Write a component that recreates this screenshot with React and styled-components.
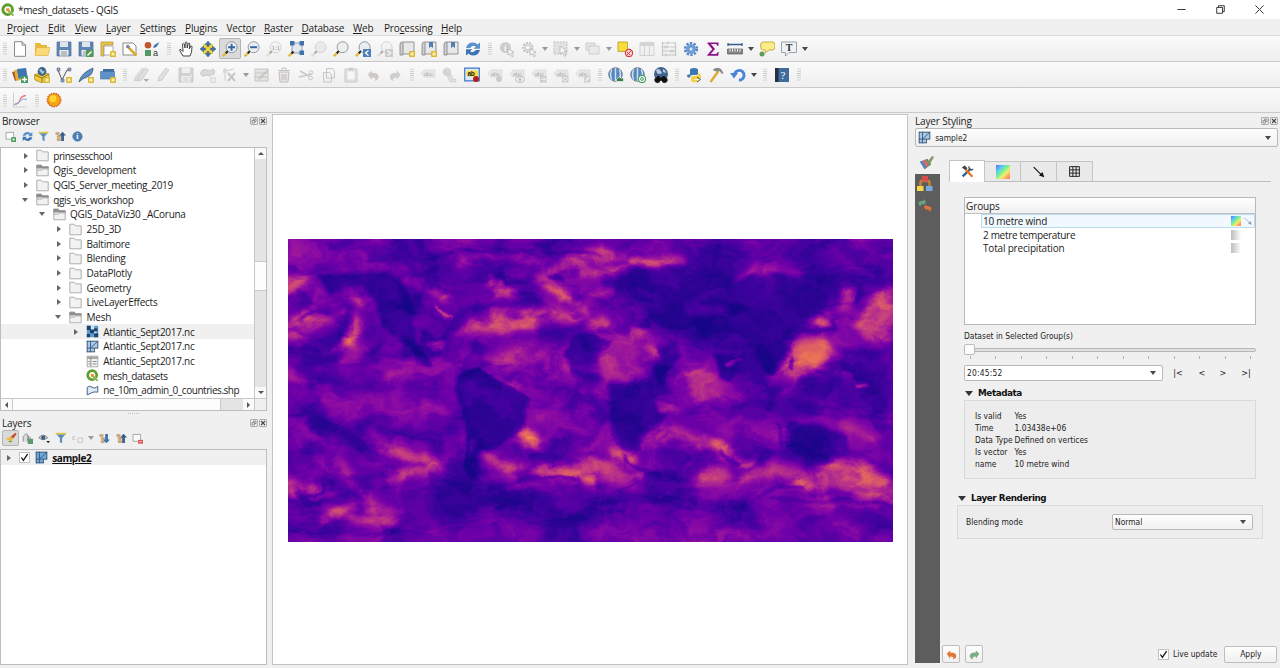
import React from 'react';
import styled, { createGlobalStyle, css } from 'styled-components';

const GlobalStyle = createGlobalStyle`
  * { box-sizing: border-box; }
  html, body { margin: 0; padding: 0; overflow: hidden; }
  body { background: #f0f0f0; }
`;

const ui = css`
  font-family: 'Open Sans', 'Noto Sans', sans-serif;
  font-size: 10px;
  letter-spacing: -0.25px;
  color: #1c1c1c;
  white-space: pre;
`;
const small = css`
  font-family: 'DejaVu Sans Condensed', 'DejaVu Sans', sans-serif;
  font-size: 8.4px;
  letter-spacing: 0;
  color: #222;
  white-space: pre;
`;

const Window = styled.div`
  ${ui}
  width: 1280px; height: 668px; display: flex; flex-direction: column; background: #f0f0f0; overflow: hidden;
`;
const TitleBar = styled.header`
  height: 19px; background: #fff; display: flex; align-items: center; padding-left: 1px; gap: 3px; flex: none; letter-spacing: -0.33px;
`;
const WindowControls = styled.div`
  margin-left: auto; display: flex; width: 89px; margin-right: 15px; justify-content: space-between;
`;
const MenuBar = styled.nav`
  height: 17px; display: flex; align-items: center; padding: 1px 0 0 7px; flex: none; border-bottom: 1px solid #dadada;
  letter-spacing: -0.15px;
`;
const MenuItem = styled.span`width: ${p => p.$w}px; flex: none;`;
const Toolbar = styled.div`
  height: ${p => p.$h || 26}px; display: flex; align-items: center; flex: none;
  background: linear-gradient(#fafafa, #efefef); border-bottom: 1px solid #c9c9c9;
`;
const Slot = styled.span`
  width: ${p => p.$w || 22.05}px; height: ${p => p.$h || 21}px; flex: none; display: flex; align-items: center; justify-content: center;
  opacity: ${p => (p.$off ? 0.36 : 1)}; filter: ${p => (p.$off ? 'grayscale(.8)' : 'none')};
  ${p => p.$on && css`background: #dadada; border: 1px solid #b4b4b4; border-radius: 2px;`}
`;
const Grip = styled.span`
  width: ${p => p.$w || 11.7}px; height: 13px; flex: none; display: flex; justify-content: center;
  &::after { content: ''; width: 4px; height: 13px; background: radial-gradient(circle, #c4c4c4 0.6px, transparent 0.9px) 0 0 / 2px 2.2px; }
`;
const Caret = styled.span`
  width: ${p => p.$w || 10}px; flex: none; display: flex; justify-content: center;
  &::after { content: ''; border: 3px solid transparent; border-top: 4px solid ${p => (p.$off ? '#999' : '#484848')}; border-bottom: 0; }
`;
const Body = styled.main`flex: 1; display: flex; min-height: 0;`;
const LeftDock = styled.aside`width: 272px; padding-right: 5px; flex: none; display: flex; flex-direction: column;`;
const CanvasFrame = styled.section`
  width: 636px; margin: 1px 0 3px; background: #fff; border: 1px solid #c4c4c4; padding: 123.5px 0 0 15px; flex: none;
`;
const RightDock = styled.aside`flex: 1; padding: 0 2px 0 7px; display: flex; flex-direction: column;`;
const DockTitle = styled.div`
  height: 15px; display: flex; align-items: center; padding-left: ${p => p.$pl ?? 2}px; flex: none; letter-spacing: -0.15px;
`;
const DockButtons = styled.span`margin-left: auto; display: flex; gap: 1px;`;
const DockTools = styled.div`height: 19px; display: flex; align-items: center; padding: 0 0 3px 2px; flex: none;`;
const TreeFrame = styled.div`
  height: 264px; display: grid; grid-template-columns: 1fr 12px; grid-template-rows: 1fr 12px;
  border: 1px solid #bdbdbd; background: #fff; flex: none;
`;
const Tree = styled.div`overflow: hidden; padding-top: 0.5px;`;
const TreeRow = styled.div`
  height: 14.66px; display: flex; align-items: center; padding-left: ${p => p.$level * 16.7 + 2.3}px; letter-spacing: ${p => p.$ls || -0.25}px;
  background: ${p => (p.$on ? '#f0f0f0' : 'transparent')};
`;
const Twisty = styled.span`
  width: 16px; height: 8px; flex: none; display: flex; align-items: center; padding-left: 4px;
  &::after {
    content: ''; border: 3px solid transparent;
    ${p => p.$s === 'open' && css`border-top: 4px solid #666; border-bottom: 0; margin-left: -2px;`}
    ${p => p.$s === 'closed' && css`border-left: 4px solid #666; border-right: 0;`}
  }
`;
const TreeIcon = styled.span`width: 17.2px; display: flex; flex: none;`;
const VScroll = styled.div`
  background: #e4e4e4; border-left: 1px solid #c8c8c8; display: flex; flex-direction: column; align-items: stretch;
`;
const HScroll = styled.div`background: #e4e4e4; border-top: 1px solid #c8c8c8; display: flex;`;
const Corner = styled.div`background: #f0f0f0; border-top: 1px solid #c8c8c8;border-left: 1px solid #c8c8c8;`;
const ScrollBtn = styled.span`
  flex: none; width: 11px; height: 11px; background: #fafafa; display: flex; align-items: center; justify-content: center;
  &::after {
    content: ''; border: 3px solid transparent;
    ${p => p.$d === 'up' && css`border-bottom: 3.5px solid #555; border-top: 0;`}
    ${p => p.$d === 'down' && css`border-top: 3.5px solid #555; border-bottom: 0;`}
    ${p => p.$d === 'left' && css`border-right: 3.5px solid #555; border-left: 0;`}
    ${p => p.$d === 'right' && css`border-left: 3.5px solid #555; border-right: 0;`}
  }
`;
const VThumb = styled.span`height: 30px; margin-top: 102px; background: #fdfdfd; border: solid #c8c8c8; border-width: 1px 0; margin-bottom: auto;`;
const HThumb = styled.span`width: 209px; background: #fdfdfd; border: solid #c8c8c8; border-width: 0 1px; margin-right: auto;`;
const Splitter = styled.div`
  height: 4px; flex: none; display: flex; justify-content: center; align-items: center;
  &::after { content: ''; width: 12px; height: 1px; background: repeating-linear-gradient(90deg, #bbb 0 1px, transparent 1px 2px); }
`;
const LayerTree = styled.div`flex: 1; background: #fff; border: 1px solid #bdbdbd; margin-bottom: 3px;`;
const LayerRow = styled.div`
  height: 15px; display: flex; align-items: center; background: #f0f0f0; padding-left: 2px;
  b { text-decoration: underline; letter-spacing: -0.4px; color: #111; }
`;
const Check = styled.span`
  width: 11px; height: 11px; background: #fff; border: 1px solid #c2c2c2; display: flex; flex: none; margin-right: ${p => p.$mr}px;
`;
const Combo = styled.div`
  height: ${p => p.$h}px; width: ${p => (p.$w ? p.$w + 'px' : 'auto')}; display: flex; align-items: center; flex: none;
  border: 1px solid #b9b9b9; border-radius: 2px; padding: 0 4px 0 2px; ${small}
  background: ${p => (p.$edit ? '#fff' : 'linear-gradient(#fefefe, #f0f0f0)')};
  letter-spacing: ${p => (p.$edit ? 0.2 : 0)}px;
  ${Caret} { margin-left: auto; }
`;
const StyleArea = styled.div`flex: 1; display: flex; padding-top: 5px; min-height: 0; margin-bottom: 5px;`;
const SideBar = styled.div`width: 25px; flex: none; display: flex; flex-direction: column;`;
const SideCurrent = styled.div`height: 22px; display: flex; align-items: center; justify-content: center; padding-right: 2px;`;
const SideRest = styled.div`
  flex: 1; background: #5d5d5d; display: flex; flex-direction: column; align-items: center; gap: 6px; padding: 2px 5px 0 0;
`;
const StylePane = styled.div`flex: 1; display: flex; flex-direction: column; padding-top: 8px;`;
const Tabs = styled.div`height: 22px; margin: 0 7px 0 9px; display: flex; align-items: flex-end; border-bottom: 1px solid #bebebe; flex: none;`;
const Tab = styled.div`
  width: 36px; height: ${p => (p.$on ? 22 : 20)}px; display: flex; align-items: center; justify-content: center;
  border: 1px solid #c4c4c4; border-left-width: ${p => (p.$on ? 1 : 0)}px; border-bottom: 0; background: ${p => (p.$on ? '#fff' : '#e9e9e9')};
  margin-bottom: ${p => (p.$on ? -1 : 0)}px;
`;
const GroupBox = styled.div`
  margin: 15px 22px 0 24px; height: 128px; background: #fff; border: 1px solid #b9b9b9; flex: none;
`;
const GroupHead = styled.div`
  height: 16px; padding: 0 1px; display: flex; align-items: center; background: linear-gradient(#fff, #f0f0f0); border-bottom: 1px solid #c2c2c2;
  letter-spacing: -0.1px;
`;
const GroupRow = styled.div`
  height: 13.7px; display: flex; align-items: center; margin-left: 16px; padding: 0 0 0 1px; letter-spacing: ${p => p.$ls || -0.25}px;
  border: 1px solid ${p => (p.$on ? '#b9dcf3' : 'transparent')}; background: ${p => (p.$on ? '#f1f8fe' : 'transparent')};
`;
const GroupIcons = styled.span`margin-left: auto; width: 23px; display: flex; gap: 2px;`;
const Swatch = styled.span`
  width: ${p => p.$s || 10}px; height: ${p => p.$s || 10}px;
  background: ${p => (p.$grey ? 'linear-gradient(90deg, #bdbdbd, #fff)' : 'linear-gradient(135deg, #5d7cf5 5%, #5ccff0 28%, #7cf08c 46%, #f2ee70 64%, #ff9c60 85%, #ff7a6a)')};
`;
const Label = styled.div`${small} margin: ${p => p.$m || 0}; line-height: 12px; flex: none;`;
const Slider = styled.div`margin: 3px 22px 0 24px; height: 19px; display: flex; flex-direction: column; flex: none;`;
const Track = styled.div`height: 9px; display: flex; align-items: center;`;
const Knob = styled.span`width: 11px; height: 11px; border: 1px solid #bcbcbc; border-radius: 2px; background: #fdfdfd; flex: none;`;
const Groove = styled.span`flex: 1; height: 4px; border: 1px solid #b8b8b8; background: #e0e0e0; border-radius: 2px; margin-left: -1px;`;
const Ticks = styled.div`
  display: flex; justify-content: space-between; padding: 2px 5px 0 6px;
  i { width: 1px; height: 3px; background: #b3b3b3; }
`;
const TimeRow = styled.div`display: flex; align-items: center; margin: 1px 0 0 24px; ${small} font-size: 9px;`;
const Step = styled.span`width: ${p => p.$w}px; text-align: center;`;
const Section = styled.div`
  display: flex; align-items: center; gap: 5px; margin: ${p => p.$m}; height: 12px; flex: none;
  font: bold 8.8px 'DejaVu Sans', sans-serif; color: #111; letter-spacing: -0.42px;
  &::before { content: ''; border: 4px solid transparent; border-top: 5px solid #333; border-bottom: 0; }
`;
const Panel = styled.div`
  margin: ${p => p.$m}; height: ${p => p.$h}px; background: #ededed; border: 1px solid #d9d9d9; flex: none; ${small}
`;
const Meta = styled.dl`
  margin: 0; padding: 8.5px 10px; display: grid; grid-template-columns: 39.5px 1fr; grid-auto-rows: 12px; line-height: 12px;
  dt, dd { margin: 0; }
`;
const Blend = styled.div`display: flex; align-items: center; justify-content: space-between; padding: 8px 9px 0 8px;`;
const Footer = styled.div`
  margin-top: auto; display: flex; align-items: center; padding-left: 2px; height: 18px; ${small}
`;
const Push = styled.button`
  height: ${p => p.$h}px; width: ${p => p.$w}px; padding: 0; display: flex; align-items: center; justify-content: center; flex: none;
  border: 1px solid #bdbdbd; border-radius: 2px; background: linear-gradient(#fefefe, #f0f0f0); ${small}
  margin: 0 ${p => p.$mr || 0}px 0 ${p => p.$ml || 0}px;
`;

/* ---------- icons ---------- */
const Star = ({ x = 10, y = 10 }) => (
  <g transform={`translate(${x} ${y})`}>
    <rect width="6" height="6" rx="1" fill="#d9b62c" />
    <path d="M3 .8v4.4M.8 3h4.4M1.5 1.5l3 3M4.5 1.5l-3 3" stroke="#fff8c8" strokeWidth=".8" />
  </g>
);
const Handle = () => <path d="M.8 15.2l4.2-4.2" stroke="#e0b93c" strokeWidth="2.4" />;
const Lens = ({ children, fill = '#e9eef3' }) => (
  <>
    <circle cx="9.6" cy="6.2" r="5.5" fill={fill} stroke="#8a8f94" strokeWidth=".9" />
    <Handle />
    <path d="M3.8 12.2l2-2.1" stroke="#222" strokeWidth="2" />
    {children}
  </>
);
const Globe = ({ children }) => (
  <>
    <circle cx="7.5" cy="7.5" r="6.8" fill="#5585bd" stroke="#6c7a88" strokeWidth=".9" />
    <path d="M7.5 1v13M3.8 2.5q-2.5 5 0 10M11.2 2.5q2.5 5 0 10" stroke="#c9e0f7" strokeWidth="1.5" fill="none" />
    {children}
  </>
);
const Tag = ({ children }) => (
  <>
    <path d="M1 6.5L4 3h11v7H4z" fill="#d5d0b0" stroke="#aaa58b" strokeWidth=".7" />
    <text x="4" y="8.6" fontSize="5.6" fontWeight="bold" fontFamily="Liberation Sans, sans-serif" fill="#555">abc</text>
    {children}
  </>
);
const Book = ({ children }) => (
  <>
    <path d="M3 1h12v12H3z" fill="#e8e8e8" stroke="#8a8a8a" strokeWidth=".9" />
    <path d="M3 1q-2 0-2 3v10h3V1" fill="#cfcfcf" stroke="#8a8a8a" strokeWidth=".9" />
    {children}
  </>
);
const Floppy = ({ c = '#5c86b5', children }) => (
  <>
    <path d="M1 1h14v14H1z" fill={c} stroke="#4b6f98" strokeWidth=".7" />
    <path d="M4 1h8v5H4z" fill="#dfe5ea" /><path d="M3.5 9h9v5.6h-9z" fill="#eee" /><path d="M5 11h6M5 13h6" stroke="#777" strokeWidth=".8" />
    {children}
  </>
);
const Refresh = () => (
  <>
    <path d="M1 7Q2.5 1.5 8 1.5q3 0 4.5 2L15 1.5v6.2H8.8L10.8 5.7Q8 3.5 5 7z" fill="#5a90cc" />
    <path d="M15 9q-1.5 5.5-7 5.5-3 0-4.5-2L1 14.5V8.3h6.2L5.2 10.3Q8 12.5 11 9z" fill="#3b74b4" />
  </>
);
const Undo = ({ c }) => <path d="M1 7l5-5v3q9-.5 9 5.5 0 3-4 4.5h-1q2.5-4-4-4v3z" fill={c} />;
const Redo = ({ c }) => <g transform="matrix(-1 0 0 1 16 0)"><Undo c={c} /></g>;
const Folder = ({ open }) => (
  <>
    <path d="M1 14.5V1.5h5.5L8 3.5H15V14.5z" fill="#f2f2f2" stroke="#9c9c9c" />
    {open && <><path d="M1 1.5h5.5L8 3.5H15V5H1z" fill="#8e8e8e" stroke="#8e8e8e" /><path d="M1 7.5h6l1.5-1.5H15" stroke="#9c9c9c" fill="none" /></>}
  </>
);
const QLogo = () => (
  <>
    <circle cx="7.6" cy="7.6" r="5.5" fill="none" stroke="#5f9f2d" strokeWidth="3.4" />
    <path d="M8 8l3.4.2-.9 1 4.8 4.6-1.9 1.7-4.5-4.8-.9 1.1z" fill="#7ab33a" stroke="#fff" strokeWidth=".5" />
    <path d="M6 6h3.5v3.5H6z" fill="#ee8a28" />
  </>
);
const MeshI = ({ c = '#a9c9ea' }) => (
  <>
    <path d="M1 1h14v9h-5v5H1z" fill={c} />
    <path d="M1.5 1v14M1 1.5h14M5.5 1v14M1 10h14M1 14.5h9.5M10.5 10v5M14.5 1v9M14.5 1.5L5.5 10" stroke="#3c5670" strokeWidth="1.1" fill="none" />
  </>
);
const Funnel = () => <><path d="M1 2h14l-5.5 6v7l-3-1.5V8z" fill="#5b8cc0" /><path d="M1 1h14v2.5H1z" fill="#dfc84c" /></>;
const Updown = ({ up }) => (
  <>
    <path d="M1 2h5v3H1zM3 6.5h5v3H3zM3 11h5v3H3z" fill="#e3a24e" stroke="#8e8e8e" strokeWidth=".5" />
    {up ? <path d="M11 1l5 5.5h-3v8H9V6.5H6z" fill="#3a5f88" /> : <path d="M11 15l5-5.5h-3v-8H9v8H6z" fill="#3a72b8" />}
  </>
);
const Pencil = ({ x = 0 }) => <path d={`M${2 + x} 14l1-4L${10 + x} 1l3 2-7 10z`} fill="#c8bba8" stroke="#777" strokeWidth=".8" />;
const Tri = () => <path d="M11 12h5l-2.5 3z" fill="#222" />;

const ICONS = {
  newDoc: <path d="M2.5 .7h7.5l3.5 3.5V15.3H2.5z M10 .7v3.5h3.5" fill="#fff" stroke="#888" />,
  open: <><path d="M1 14V2h5l1.5 2H13v10z" fill="#e8b83c" /><path d="M1 14.5l1.5-8H16l-2 8z" fill="#f9d978" stroke="#dfac35" strokeWidth=".6" /></>,
  save: <Floppy />,
  saveAs: <Floppy><path d="M8 9h7.5v7H8z" fill="#4f9a5a" /><path d="M9.5 14.5l4-4" stroke="#fff" strokeWidth="1.5" /></Floppy>,
  layout: <><path d="M1 1h12v3H4v11H1z" fill="#e9c250" stroke="#b8902a" strokeWidth=".7" /><path d="M4 5h9v9H4z" fill="#fff" stroke="#999" strokeWidth=".8" /><Star /></>,
  layouts: <><path d="M1 2h10l3 3v9H1z" fill="#fff" stroke="#888" /><path d="M7 7l7.5 7.5" stroke="#d9a92c" strokeWidth="2.5" /><path d="M4 6.5q-.5-2.5 2-3l2 2-1 2.5z" fill="#889" /></>,
  style: <><circle cx="4" cy="4.3" r="3.3" fill="#c2532c" /><path d="M9 6l2-2.5L15.5 1 13 5.5 10 7z" fill="#4674a8" /><path d="M1 9h6v6H1z" fill="#4f9a62" /><text x="9" y="15" fontSize="9" fontFamily="Liberation Sans, sans-serif" fill="#333">a</text></>,
  pan: <path d="M5 15L1.5 9q0-1.5 2 0L5 10.5 4.5 3q1-1.5 1.7 0L7 7l.3-5.5q1-1 1.7 0L9.2 7l1-4.5q1-.8 1.6.2L11.3 8l1.4-3q1.2-.5 1.3.8Q14 12 12 15z" fill="#fff" stroke="#333" strokeWidth=".9" />,
  panSel: <><path d="M3 3h10v10H3z" fill="#f2d33e" /><path d="M8 0l3 3.5H9v2H7v-2H5zM8 16l-3-3.5h2v-2h2v2h2zM0 8l3.5-3v2h2v2h-2v2zM16 8l-3.5-3v2h-2v2h2v2z" fill="#3f74ad" stroke="#284d75" strokeWidth=".4" /></>,
  zoomIn: <Lens><path d="M9.6 2.7v7M6.1 6.2h7" stroke="#3566a0" strokeWidth="1.9" /></Lens>,
  zoomOut: <Lens><path d="M6.1 6.2h7" stroke="#3566a0" strokeWidth="2" /></Lens>,
  zoom11: <Lens><text x="5.8" y="8.5" fontSize="6" fontWeight="bold" fontFamily="Liberation Sans, sans-serif" fill="#444">1:1</text></Lens>,
  zoomFull: <><path d="M4 2h10v10H4z" fill="#e3e9ef" stroke="#567" strokeWidth=".6" /><Handle /><path d="M3.5 12.5l2-2" stroke="#222" strokeWidth="2" /><path d="M2 0h4.5v4.5H2zM11.5 0H16v4.5h-4.5zM11.5 9.5H16V14h-4.5z" fill="#3f74ad" /></>,
  zoomSel: <Lens fill="#dcd7b2" />,
  zoomLayer: <Lens fill="#eee" />,
  zoomLast: <Lens><path d="M8 8h8v8H8z" fill="#4b7fb8" /><path d="M13.5 9.5l-3 2.5 3 2.5" stroke="#fff" strokeWidth="1.3" fill="none" /></Lens>,
  zoomNext: <Lens><path d="M8 8h8v8H8z" fill="#888" /><path d="M10.5 9.5l3 2.5-3 2.5" stroke="#fff" strokeWidth="1.3" fill="none" /></Lens>,
  bookNew: <Book><Star /></Book>,
  bookMark: <Book><path d="M8 1h4v6l-2-1.5L8 7z" fill="#4d7fb3" /><Star /></Book>,
  book: <Book><path d="M8 1h4v6l-2-1.5L8 7z" fill="#4d7fb3" /></Book>,
  refresh: <Refresh />,
  identify: <><circle cx="6.5" cy="6.5" r="5.5" fill="#888" /><text x="5" y="10" fontSize="9" fontWeight="bold" fontFamily="Liberation Serif, serif" fill="#fff">i</text><path d="M9 8l6 3-2.5 1 2 3-1.5.8-2-3L9 14z" fill="#fff" stroke="#444" strokeWidth=".8" /></>,
  gearSel: <><circle cx="6.8" cy="6.5" r="4.6" fill="#ddd" stroke="#666" strokeWidth="2" strokeDasharray="2 1.2" /><circle cx="6.8" cy="6.5" r="2.5" fill="#fff" stroke="#666" /><path d="M9 8l6 3-2.5 1 2 3-1.5.8-2-3L9 14z" fill="#fff" stroke="#444" strokeWidth=".8" /></>,
  select: <><path d="M1 1h13v12H1z" fill="#c9c298" stroke="#666" strokeDasharray="2 1" /><path d="M7 5l7 5-3 .5 2 4-1.5.8-2-4L7 13z" fill="#fff" stroke="#444" strokeWidth=".8" /></>,
  selForm: <><path d="M1 2h9v7H1z" fill="#cfc9a5" stroke="#888" /><path d="M4 5h10v8H4z" fill="#ded9bd" stroke="#888" /></>,
  deselect: <><path d="M1 1h9.5v9.5H1z" fill="#f7dd3a" stroke="#b99a1c" strokeWidth=".8" /><circle cx="12" cy="12" r="3.6" fill="#fbdada" stroke="#d33a3a" strokeWidth="1.2" /><path d="M9.7 14.2l4.6-4.6M10 11l3 3" stroke="#d33a3a" /></>,
  table: <><path d="M1 1.5h14v13H1z" fill="#eee" stroke="#999" /><path d="M1 2h14v3H1z" fill="#999" /><path d="M5.5 2v12M10.5 2v12" stroke="#999" /></>,
  abacus: <path d="M1.5 1v14M14.5 1v14M1 2h14M1 6h14M1 10h14M1 14h14M4 4.5v3M6 4.5v3M10 8.5v3M12 8.5v3M5 12.5v3M7 .5v3" stroke="#777" strokeWidth="1.2" />,
  gear: <><circle cx="8" cy="8" r="5.6" fill="none" stroke="#5488c7" strokeWidth="3" strokeDasharray="2.2 1.32" /><circle cx="8" cy="8" r="4.8" fill="#6c9cd6" /><circle cx="8" cy="8" r="1.5" fill="#dfeaf7" /></>,
  sigma: <path d="M2.5 1.5h11v3.3h-1.2Q12 3 10.5 3H6l4 5-4.3 5h5q1.5 0 2-2h1l-.5 3.8H2.3V14l5-5.8-4.8-5.7z" fill="#8e1289" />,
  measure: <><path d="M1 3.5h14M1 2v3M15 2v3" stroke="#345d8c" strokeWidth="1.3" /><path d="M.5 8h15v5H.5z" fill="#888" stroke="#444" strokeWidth=".6" /><path d="M3 8v2.5M5.5 8v2.5M8 8v2.5M10.5 8v2.5M13 8v2.5" stroke="#fff" strokeWidth=".9" /></>,
  tip: <><path d="M4 1h10q2 0 2 4t-2 4h-4l-4 3 .5-3H4Q1.5 9 1.5 5T4 1z" fill="#faec86" stroke="#bd9f33" strokeWidth=".8" /><circle cx="3" cy="13" r="2.5" fill="#5c9e50" /></>,
  text: <><path d="M.5 1h15v10.5H8L4.5 15v-3.5h-4z" fill="#eef3f6" stroke="#889" strokeWidth=".8" /><text x="4.7" y="9.8" fontSize="10" fontWeight="bold" fontFamily="Liberation Serif, serif" fill="#333">T</text></>,
  layers: <><path d="M0 5l8-2 2 8-7 3z" fill="#a4532b" /><path d="M2 3l9-1 1 10-8 2z" fill="#e2b03b" /><path d="M5 2l9-1 1.5 9-9 1.5z" fill="#3d75b3" /><path d="M9 9h7v7H9z" fill="#4b9a62" /><path d="M12.5 10v5M10 12.5h5" stroke="#fff" strokeWidth="1.3" /></>,
  geopkg: <><path d="M0 8l8-3 7 2v5.5l-7 3.5-7-3z" fill="#f0cb3a" stroke="#8b7419" strokeWidth=".6" /><path d="M1 8l7 3 7-4M8 11v4" stroke="#8b7419" fill="none" /><circle cx="8" cy="4.5" r="4.4" fill="#40648a" /><path d="M5 3q2-2 3 0t3 1q-1 3-3 3z" fill="#a9c4dc" /><Star /></>,
  vnew: <><path d="M2 3l4 10 5-10 4-1" stroke="#555" fill="none" strokeWidth="1" /><path d="M1 1h3v3H1zM5 12h3v3H5zM12 1h3v3h-3z" fill="#8aa5c0" stroke="#557" strokeWidth=".5" /><Star /></>,
  feather: <><path d="M1 15Q3 6 15 1q0 7-6 9-4 1-8 5z" fill="#5e8fc5" stroke="#34597f" strokeWidth=".8" /><Star /></>,
  virt: <><path d="M3 2h11v7H3z" fill="#3f6d9f" /><path d="M.5 4.5h14v7.5H.5z" fill="#5e92c8" stroke="#3f6d9f" strokeWidth=".6" /><Star /></>,
  edits: <><Pencil x={-1.5} /><Pencil x={1.5} /><path d="M9.5 12h5.5l-2.7 3z" fill="#333" /></>,
  edit: <Pencil />,
  saveEd: <Floppy c="#999"><path d="M9 13l5-5" stroke="#ccc" strokeWidth="2" /></Floppy>,
  addPoly: <><path d="M1 5q2-4 6-2t6-1q3 2 1 5L9 9Q6 7 4 9 0 9 1 5z" fill="#aaa" stroke="#777" /><Star /></>,
  vertex: <><path d="M3 1v13M3 4l9-2" stroke="#888" /><path d="M1 2h4v4H1z" fill="#aaa" /><path d="M6 6l7 8M13 6l-7 8" stroke="#777" strokeWidth="2" /></>,
  multi: <><path d="M1 2h13v12H1z" fill="#cfc99c" stroke="#777" /><path d="M1 6h13M1 10h13" stroke="#777" /><path d="M5 12l9-9" stroke="#8a7340" strokeWidth="2" /></>,
  trash: <><path d="M3 5h10l-1 10H4z" fill="#e6c9c9" stroke="#955" /><path d="M2 3.5h12M6 3V1h4v2M6 7v6M8 7v6M10 7v6" stroke="#955" fill="none" /></>,
  cut: <><path d="M2 4l9 5M1 10l13-3" stroke="#777" strokeWidth="1.5" /><circle cx="12.5" cy="11" r="1.9" fill="none" stroke="#777" /><circle cx="13" cy="5.5" r="1.8" fill="none" stroke="#777" /></>,
  copy: <path d="M5.5 1.5h6l2 2V11h-8zM2.5 5.5h6l2 2V15h-8z" fill="#eee" stroke="#777" />,
  paste: <><path d="M2 2h12v13H2z" fill="#bbb" stroke="#888" /><path d="M4.5 4.5h7v8h-7z" fill="#fff" /><path d="M6 .8h4v2.5H6z" fill="#777" /></>,
  undo: <g transform="translate(2 2) scale(.78)"><Undo c="#a97b5d" /></g>, redo: <g transform="translate(2 2) scale(.78)"><Redo c="#6d9b74" /></g>,
  tag: <Tag />,
  pie: <><circle cx="5" cy="5" r="4.3" fill="#999" /><path d="M5 5V.7A4.3 4.3 0 0 1 9 6z" fill="#c99" /><path d="M6 8h4v4h4v3H8l-2-3z" fill="#c3bd98" stroke="#888" strokeWidth=".6" /></>,
  tagPin: <><path d="M.7 1.2h14.6v12.6H.7z" fill="#dbe8f6" stroke="#3d79c4" strokeWidth="1.2" /><path d="M2 6.5L4 3.5h10v6H4z" fill="#f7dc3f" /><text x="3.5" y="8.8" fontSize="6.5" fontWeight="bold" fontFamily="Liberation Sans, sans-serif" fill="#222">ab</text><circle cx="12" cy="12" r="3" fill="#b51d1d" /></>,
  tag1: <Tag><circle cx="12" cy="12" r="3" fill="#888" /></Tag>,
  tag2: <Tag><ellipse cx="11" cy="12.5" rx="4.5" ry="2.8" fill="#eee" stroke="#555" /><circle cx="11" cy="12.5" r="1.3" fill="#555" /></Tag>,
  tag3: <Tag><path d="M9 9h6.5v6.5H9z" fill="#888" /><path d="M10 12.2h4M12.5 10.5l2 1.7-2 1.7" stroke="#fff" fill="none" /></Tag>,
  tag4: <Tag><path d="M9 9h6.5v6.5H9z" fill="#888" /><circle cx="12.2" cy="12.2" r="1.9" fill="none" stroke="#fff" /></Tag>,
  tag5: <Tag><path d="M9 9h6.5v6.5H9z" fill="#999" /><path d="M10.5 14l3.5-3.5" stroke="#fff" strokeWidth="1.5" /></Tag>,
  g1: <Globe><path d="M8.5 12.5L12 9v2h3.5v3.5H8.5z" fill="#3f7d4a" stroke="#fff" strokeWidth=".6" /></Globe>,
  g2: <Globe><circle cx="12" cy="12" r="3.6" fill="#fff" stroke="#4a9960" strokeWidth="1.2" /><circle cx="12" cy="12" r="1.4" fill="none" stroke="#4a9960" /></Globe>,
  g3: <><circle cx="8" cy="7" r="7" fill="#40658e" /><path d="M3 3q2-2 4 0t2 3q-3 2-5 0zM10 2q3 1 3 4l-3-1z" fill="#b5cbe0" /><path d="M1.500 14a2.600 2.600 0 0 1 2-3.500l1-1.500h2l.5 1.500h2l.5-1.500h2l1 1.500a2.600 2.600 0 0 1 2 3.500q-1 2-3 2-2.500 0-2.800-2.500H7.300Q7 16 4.500 16q-2 0-3-2z" fill="#111" /></>,
  python: <><path d="M4 7.5V3q0-2 4-2t4 2v3.5q0 1.5-2 1.5H6q-2 0-2 2.5H2Q0 8.500 2 7.500z" fill="#3a78b0" /><path d="M12 7v-.5h2q2 3 0 5.500H8.500v1H12q0 2.300-3.500 2.300T5 13v-2.500Q5 9 7 9h3q2 0 2-2z" fill="#f5cf42" /><path d="M11 10l3.500 2.500-3.500 2.500" stroke="#555" fill="none" /></>,
  hammer: <><path d="M2.500 15L10.500 4" stroke="#e0a92a" strokeWidth="2.300" /><path d="M5 2.500Q9-.5 13 2l2.500 4-1.500 1-2.500-3-2 .5L6 4z" fill="#8a8a8a" /></>,
  reload: <><path d="M4.500 8A4.800 4.800 0 1 1 9 13" stroke="#4a86d8" strokeWidth="2.900" fill="none" /><path d="M0 6h8l-4 5.500z" fill="#4a86d8" /></>,
  help: <><path d="M2 1h13v14H2z" fill="#3f6c9c" /><path d="M1 1h3.500v14H1z" fill="#26303c" /><text x="6.500" y="12" fontSize="11" fontFamily="Liberation Serif, serif" fill="#fff">?</text></>,
  profile: <><path d="M1.500 1v14H15" stroke="#bbb" fill="none" strokeDasharray="1.500 .8" /><path d="M3 12q4 0 5-4t6-4.500" stroke="#e77f7f" fill="none" strokeWidth="1.300" /><path d="M2 13q5-2 7-4.500t6-1" stroke="#86a3e0" fill="none" /></>,
  sun: <><circle cx="8" cy="8" r="6.800" fill="#d9621d" stroke="#cf6a2d" strokeDasharray="1.200 1.200" strokeWidth="1.400" /><circle cx="8" cy="8" r="6" fill="#f7a511" /><circle cx="7" cy="6.500" r="3.500" fill="#ffe23c" opacity=".8" /></>,
  addSel: <><path d="M1.500 2h11v10h-11z" fill="#fafafa" stroke="#888" /><path d="M9 9h7v7H9z" fill="#4b9a62" /><path d="M12.500 10.500v4M10.500 12.500h4" stroke="#fff" /></>,
  remSel: <><path d="M1.500 2h11v10h-11z" fill="#fafafa" stroke="#888" /><path d="M9 10h7v5.500H9z" fill="#d9484c" /><path d="M10.500 12.700h4" stroke="#fff" strokeWidth="1.200" /></>,
  funnel: <Funnel />, collapse: <Updown up />, expand: <Updown />,
  info: <><circle cx="8" cy="8" r="6.800" fill="#4b80b7" stroke="#3f6d9d" /><text x="6.200" y="12" fontSize="11" fontWeight="bold" fontFamily="Liberation Serif, serif" fill="#fff">i</text></>,
  folder: <Folder />, folderOpen: <Folder open />, qgis: <QLogo />, mesh: <MeshI />, meshB: <MeshI c="#6ea9de" />,
  raster: <><path d="M1 1h14v14H1z" fill="#5b9bd0" /><path d="M1 1h5v5H1zM10 4h4v4h-4zM5 6h5v4H5zM1 11h4v4H1zM10 10h5v5h-5z" fill="#1d4468" /><path d="M6 1h4v4H6zM10 8h3v2h-3z" fill="#cfe4f5" /></>,
  tbl: <><path d="M1.500 1.500h13v13h-13z" fill="#f4f4f4" stroke="#999" /><path d="M1 2h14v3H1z" fill="#aaa" /><path d="M6 2v12M3 8h2M3 11h2M8 8h5M8 11h5" stroke="#888" strokeWidth="1.200" /></>,
  poly: <path d="M1.500 4q3-2.500 6 0t7-1v7q-5-1-8 1l-5 2.500z" fill="#dfe9f4" stroke="#456287" strokeWidth="1.200" />,
  brush: <><path d="M1 8q4 5 8 4l2-4-3-3-3 3z" fill="#eab63c" /><path d="M8 6l6-5 1.500 1.500-4.500 6z" fill="#c8492f" /><path d="M4 12l3 2 3-2" fill="#4f9b54" /></>,
  group: <><path d="M3 13V6l4-4 3 4v7" fill="#ddd" stroke="#777" /><path d="M9 4v9M12 6v6" stroke="#777" /><path d="M9 9h7v7H9z" fill="#5b9a6b" /></>,
  eye: <><path d="M1 7.500Q7 1 13 7.500 7 13 1 7.500z" fill="#ddd" stroke="#666" /><circle cx="7" cy="7.500" r="2.800" fill="#3c5f88" /><Tri /></>,
  eps: <><text x="0" y="10" fontSize="12" fontFamily="Liberation Serif, serif" fill="#555">ε</text><path d="M8 8h6v6H8z" fill="#eee" stroke="#666" /></>,
  paint: <><path d="M1 6l8-3 4 6-7 5z" fill="#4f9a62" /><path d="M1 6l3-1 4 7-2 2z" fill="#5d80c4" /><path d="M4 5l3-1.300 4 6.300-3 2z" fill="#d76c6c" /><path d="M9 6l5-6 2 1-4 7z" fill="#8a9660" /></>,
  tree: <><path d="M3.500 5v7M12.500 5v7M3 5h10" stroke="#c98133" strokeWidth="2.500" /><path d="M5 0h6v5.500H5z" fill="#d94c4c" /><path d="M0 10h6.500v5H0z" fill="#f6d94a" /><path d="M9 10h6.500v5H9z" fill="#7aa9dc" /></>,
  history: <><g transform="scale(.62)"><Redo c="#62a57c" /></g><g transform="translate(6 6) scale(.62)"><Undo c="#e2713a" /></g></>,
  undoC: <Undo c="#e07a3a" />, redoC: <Redo c="#7ab083" />,
  tools: <><path d="M2 14L12 4.500" stroke="#2d5f98" strokeWidth="2.700" /><path d="M10 1.500q-1 2.500 1 4t4-.5" stroke="#555" strokeWidth="1.700" fill="none" /><path d="M6 6l8 8.500" stroke="#e8741c" strokeWidth="2.800" /><path d="M1 3L4.500.5 8 4 5.500 6.500z" fill="#444" /></>,
  arrow: <><path d="M2 2.500l9 9" stroke="#111" strokeWidth="1.300" /><path d="M14 14l-2-6-4 4z" fill="#111" /></>,
  arrowS: <><path d="M2 3l9 8" stroke="#aab" strokeWidth="1.300" /><path d="M14 14l-2-6-4 4z" fill="#99a" /></>,
  grid: <path d="M2 2h12v12H2zM6 2v12M10 2v12M2 6h12M2 10h12" fill="none" stroke="#222" strokeWidth="1.200" />,
  float: <><rect x=".7" y=".7" width="14.600" height="14.600" rx="3" fill="#eee" stroke="#777" strokeWidth="1.300" /><path d="M4 7h5v5H4zM7 7V4h5v5H9" fill="none" stroke="#666" strokeWidth="1.300" /></>,
  close: <><rect x=".7" y=".7" width="14.600" height="14.600" rx="3" fill="#eee" stroke="#777" strokeWidth="1.300" /><path d="M4 4l8 8M12 4l-8 8" stroke="#444" strokeWidth="2.200" /></>,
  tick: <path d="M2.500 8l3.500 5L13.500 2" fill="none" stroke="#111" strokeWidth="2.300" />,
  min: <path d="M2 8h12" stroke="#333" strokeWidth="1.400" />,
  max: <path d="M2.500 5h8.500v8.500H2.500zM5 5V2.500h8.500V11H11" fill="none" stroke="#333" strokeWidth="1.400" />,
  x: <path d="M2 2l12 12M14 2L2 14" stroke="#333" strokeWidth="1.400" />,
};
const Svg = styled.svg`display: block; flex: none;`;
const Icon = ({ n, s = 16 }) => <Svg width={s} height={s} viewBox="0 0 16 16">{ICONS[n]}</Svg>;

/* A leading "-" marks a disabled tool, "+" the pressed one; "|" is a grip, "v" a drop-down caret. */
const ROW1 = 'newDoc open save saveAs layout layouts style | pan panSel +zoomIn zoomOut -zoom11 zoomFull -zoomSel zoomLayer zoomLast -zoomNext bookNew bookMark book refresh | -identify -gearSel -v -select -v -selForm -v deselect -table -abacus gear sigma measure v tip text v';
const ROW2 = 'layers geopkg vnew feather virt | -edits -edit -saveEd -addPoly -vertex -v -multi -trash -cut -copy -paste -undo -redo | -tag -pie tagPin -tag1 -tag2 -tag3 -tag4 -tag5 | g1 g2 g3 | python hammer reload v | help |';
const ROW3 = 'profile | sun';
const Tools = ({ row, h }) => (
  <Toolbar $h={h}>
    <Grip $w={9.2} />
    {row.split(' ').map((t, i) => {
      if (t === '|') return <Grip key={i} />;
      const off = t[0] === '-';
      const on = t[0] === '+';
      const n = off || on ? t.slice(1) : t;
      return n === 'v' ? <Caret key={i} $off={off} /> : <Slot key={i} $off={off} $on={on}><Icon n={n} /></Slot>;
    })}
  </Toolbar>
);

const MENUS = [['', 'P', 'roject', 41], ['', 'E', 'dit', 27], ['', 'V', 'iew', 31], ['', 'L', 'ayer', 34], ['', 'S', 'ettings', 45], ['', 'P', 'lugins', 41.5], ['Vect', 'o', 'r', 37.5], ['', 'R', 'aster', 37.5], ['', 'D', 'atabase', 51.5], ['', 'W', 'eb', 31], ['Pro', 'c', 'essing', 57], ['', 'H', 'elp', 30]];

/* level, twisty state, icon, name, selected, letter spacing */
const TREE = [
  [1, 'closed', 'folder', 'prinsesschool', false, -0.42], [1, 'closed', 'folderOpen', 'Qgis_development', false, -0.22], [1, 'closed', 'folder', 'QGIS_Server_meeting_2019', false, -0.32],
  [1, 'open', 'folderOpen', 'qgis_vis_workshop', false, -0.33], [2, 'open', 'folderOpen', 'QGIS_DataViz30 _ACoruna', false, -0.26],
  [3, 'closed', 'folder', '25D_3D'], [3, 'closed', 'folder', 'Baltimore'], [3, 'closed', 'folder', 'Blending'], [3, 'closed', 'folder', 'DataPlotly'],
  [3, 'closed', 'folder', 'Geometry'], [3, 'closed', 'folder', 'LiveLayerEffects'], [3, 'open', 'folderOpen', 'Mesh'],
  [4, 'closed', 'raster', 'Atlantic_Sept2017.nc', true, -0.27], [4, '', 'mesh', 'Atlantic_Sept2017.nc', false, -0.27], [4, '', 'tbl', 'Atlantic_Sept2017.nc', false, -0.27],
  [4, '', 'qgis', 'mesh_datasets', false, -0.42], [4, '', 'poly', 'ne_10m_admin_0_countries.shp', false, -0.45],
];

/* ---------- wind-speed field: grey intensities run through a plasma ramp ---------- */
const g = v => `rgb(${v},${v},${v})`;
const Sh = ({ v, d, o }) => <path d={d} fill={g(v)} opacity={o} />;
const St = ({ v, w, d, o = 1 }) => <path d={d} fill="none" stroke={g(v)} strokeWidth={w} strokeLinecap="round" opacity={o} />;

const WindMap = () => (
  <Svg width="605" height="303" viewBox="0 0 605 303">
    <defs>
      <filter id="b9" x="-50%" y="-50%" width="200%" height="200%"><feGaussianBlur stdDeviation="16" /></filter>
      <filter id="b4" x="-50%" y="-50%" width="200%" height="200%"><feGaussianBlur stdDeviation="9" /></filter>
      <filter id="b3" x="-50%" y="-50%" width="200%" height="200%"><feGaussianBlur stdDeviation="4" /></filter>
      <filter id="b2" x="-50%" y="-50%" width="200%" height="200%"><feGaussianBlur stdDeviation="2.5" /></filter>
      <filter id="plasma" filterUnits="userSpaceOnUse" x="-40" y="-40" width="685" height="383" colorInterpolationFilters="sRGB">
        <feTurbulence type="fractalNoise" baseFrequency="0.03 0.04" numOctaves="4" seed="7" result="warp" />
        <feDisplacementMap in="SourceGraphic" in2="warp" scale="12" xChannelSelector="R" yChannelSelector="G" result="img" />
        <feTurbulence type="fractalNoise" baseFrequency="0.02 0.034" numOctaves="6" seed="4" result="t" />
        <feDisplacementMap in="t" in2="warp" scale="45" xChannelSelector="G" yChannelSelector="R" />
        <feColorMatrix values="1.8 0 0 0 -.4 1.8 0 0 0 -.4 1.8 0 0 0 -.4 0 0 0 0 1" result="n" />
        <feComposite in="img" in2="n" operator="arithmetic" k1=".7" k2=".6" k3=".1" k4="-.04" />
        <feComponentTransfer>
          <feFuncR type="table" tableValues=".09 .25 .42 .56 .69 .80 .88 .95 .99 .99 .94" />
          <feFuncG type="table" tableValues=".02 .01 0 .05 .16 .28 .39 .52 .65 .81 .98" />
          <feFuncB type="table" tableValues=".53 .62 .66 .64 .56 .47 .38 .29 .21 .14 .13" />
          <feFuncA type="table" tableValues="1 1" />
        </feComponentTransfer>
      </filter>
    </defs>
    <g filter="url(#plasma)">
      <rect x="-60" y="-60" width="725" height="423" fill={g(48)} />
      <g transform="translate(-3 -4) scale(.3333)">
        <g filter="url(#b9)">
          <Sh v={78} d="M-20 380L220 390 380 400 520 430 480 560 300 600 100 520-20 420z" o=".45" />
          <Sh v={85} d="M500 380L900 320 850 440 700 460z" />
          <Sh v={20} d="M330 750L800 760 940 740 940 860 640 850 380 880z" />
          <Sh v={20} d="M0 850L250 850 400 880 200 890 0 890z" />
          <Sh v={24} d="M420 50L800 50 760 90 600 110 640 190 500 200 400 120z" />
          <Sh v={65} d="M0 20L400 40 300 90 0 110z" o=".5" />
          <Sh v={28} d="M0 430L500 440 500 470 100 480z" o=".7" />
          <Sh v={26} d="M560 400L700 330 860 310 880 280 700 290 540 330z" />
          <Sh v={80} d="M740 480L930 480 930 560 760 560z" o=".4" />
        </g>
        <g filter="url(#b3)">
          <Sh v={14} d="M100 120L320 110 370 190 400 260 390 330 440 390 400 385 340 310 290 270 270 190 230 150 130 180z" />
          <Sh v={32} d="M380 180L600 190 540 260 500 320 420 330 390 260z" />
          <Sh v={13} d="M515 430L580 405 640 440 735 490 710 580 650 620 600 660 560 740 540 700 560 590 530 530 510 480z" />
          <Sh v={18} d="M840 360L870 300 960 280 960 430 860 420z" />
          <Sh v={125} d="M425 320L480 312 470 340 425 335z" />
        </g>
        <g filter="url(#b4)">
          <Sh v={135} d="M-40 130L90 115 60 150 0 190-40 190z" />
          <Sh v={125} d="M-40 270L10 270Q60 200 120 235L180 220 130 270 60 310-40 325z" />
          <Sh v={165} d="M15 250L70 245 90 262 40 290z" />
          <Sh v={125} d="M165 160Q220 165 250 210L235 230 200 180z" />
          <St v={135} w={28} d="M215 240Q220 280 195 315" />
          <Sh v={112} d="M500 310L560 240 640 212 740 212 890 240 860 270 700 280 600 295z" />
          <Sh v={140} d="M780 212L860 225 855 245 780 235z" />
          <Sh v={135} d="M610 130L710 170 690 200 620 180z" />
          <St v={118} w={28} d="M760 130Q830 90 960 60" />
          <St v={120} w={28} d="M780 130Q830 190 900 230" />
          <St v={105} w={20} d="M360 140Q430 160 490 190" />
          <St v={90} w={14} d="M520 90L600 60 780 80" />
          <St v={75} w={24} d="M0 415Q160 430 230 340" />
          <St v={112} w={42} d="M-30 730Q50 790 120 770" />
          <St v={92} w={34} d="M170 690Q220 790 330 850" />
          <St v={118} w={26} d="M120 845L200 810" />
          <St v={110} w={16} d="M190 850L330 865" />
          <St v={95} w={28} d="M260 600Q340 650 450 700L370 720 270 740" />
          <St v={120} w={20} d="M420 660Q450 680 465 710" />
          <St v={88} w={24} d="M330 630Q400 700 500 670T540 610" />
          <St v={138} w={32} d="M720 590L745 635" />
          <St v={105} w={34} d="M610 670Q700 710 800 710T980 710" />
          <St v={110} w={50} d="M780 690Q850 730 980 700" />
          <St v={14} w={18} d="M100 560Q190 590 230 640T420 690" />
          <St v={14} w={16} d="M700 620Q740 680 860 690" />
          <St v={14} w={18} d="M60 640Q150 600 130 700" />
          <St v={16} w={16} d="M150 290Q210 250 190 200" />
          <St v={16} w={14} d="M380 610Q470 590 450 650" />
          <St v={14} w={18} d="M-30 345Q120 340 180 290" />
        </g>
        <g filter="url(#b2)">
          <St v={20} w={5} d="M60 250Q80 225 130 228" />
          <St v={15} w={5} d="M420 60L620 48 940 62" />
          <St v={12} w={6} d="M-30 800Q130 790 120 750" />
          <St v={12} w={5} d="M-30 885Q200 905 380 885" />
          <St v={18} w={6} d="M480 740Q600 760 700 740T940 750" />
          <St v={10} w={7} d="M640 120L660 150 720 140" />
          <St v={10} w={7} d="M790 120L840 140" />
          <St v={120} w={7} d="M460 220L480 245 500 250" />
          <St v={8} w={4} d="M580 410L640 440 735 490" />
          <St v={8} w={7} d="M560 560L550 700 575 735" />
        </g>
      </g>
      <g transform="translate(302 -4) scale(.3333)">
        <g filter="url(#b9)">
          <Sh v={17} d="M60 120L260 80 500 110 900 100 900 160 780 170 700 230 640 280 560 340 420 350 300 330 190 280 130 200z" />
          <Sh v={80} d="M250 400L380 370 420 440 380 520 220 520z" />
          <Sh v={65} d="M360 560L580 580 570 640 400 600z" />
          <Sh v={72} d="M0 290L180 310 170 430 40 430z" />
          <Sh v={18} d="M300 20L600 20 500 90 300 70z" o=".8" />
          <Sh v={70} d="M0 860L500 880 760 870 930 920 0 920z" o=".6" />
          <Sh v={20} d="M780 810L950 830 950 900 760 880z" />
          <Sh v={24} d="M640 420L920 430 920 540 660 500z" />
          <Sh v={22} d="M200 620L360 610 380 680 200 690z" />
        </g>
        <g filter="url(#b3)">
          <Sh v={13} d="M50 440L190 430 200 500 240 550 180 590 140 640 90 630 60 550z" />
          <Sh v={15} d="M200 330L260 300 270 360 210 460 190 380z" />
          <Sh v={15} d="M370 350L450 360 430 440 390 430z" />
          <Sh v={16} d="M500 330L600 330 560 420 520 410z" />
          <Sh v={13} d="M580 560L680 550 760 600 770 660 600 640z" />
          <Sh v={15} d="M30 130L130 120 90 170 30 170z" />
        </g>
        <g filter="url(#b4)">
          <Sh v={115} d="M530 430L620 330 700 300 730 330 690 400 620 430 550 450z" />
          <Sh v={135} d="M650 260L700 240 740 260 700 280z" />
          <Sh v={108} d="M960 130L830 190 800 280 840 320 960 310z" />
          <Sh v={145} d="M870 170L960 150 960 210z" />
          <Sh v={90} d="M750 170L800 160 770 240 740 230z" />
          <St v={118} w={22} d="M-20 105Q100 90 280 75" />
          <St v={115} w={16} d="M0 50L100 65" />
          <St v={100} w={12} d="M440 130L480 105 640 105" />
          <St v={80} w={18} d="M300 230L400 225" />
          <St v={130} w={20} d="M0 265L50 260" />
          <St v={120} w={18} d="M120 280L160 300M175 330L200 370" />
          <St v={100} w={24} d="M60 170L0 200" />
          <St v={95} w={18} d="M220 520Q340 530 440 480" />
          <St v={100} w={42} d="M170 610Q280 580 390 640" />
          <St v={135} w={32} d="M80 650L120 680" />
          <St v={140} w={28} d="M380 630L430 670 490 690" />
          <Sh v={122} d="M-20 670L60 690 180 740 100 760-20 750z" />
          <St v={98} w={42} d="M330 740L400 720M470 720Q560 700 640 710" />
          <Sh v={125} d="M600 750Q660 680 800 690L840 700 960 770 960 800 760 770z" />
          <St v={125} w={34} d="M640 720Q760 770 950 790" />
          <St v={110} w={12} d="M660 790Q760 810 950 815" />
          <St v={15} w={18} d="M280 530Q480 480 560 520T740 560" />
          <St v={18} w={20} d="M500 640Q700 660 760 660T950 730" />
          <St v={16} w={16} d="M100 700Q240 760 330 700T540 690" />
          <St v={14} w={14} d="M0 800Q150 770 260 800T470 800" />
          <St v={76} w={24} d="M620 560Q700 530 860 610" />
          <St v={20} w={14} d="M770 350Q860 340 950 350" />
        </g>
        <g filter="url(#b2)">
          <St v={10} w={6} d="M390 655L440 690" />
          <St v={10} w={7} d="M650 290L740 280 730 260" />
          <St v={10} w={12} d="M790 200L815 170" />
          <St v={12} w={7} d="M600 370L610 400M550 380L540 410" />
          <St v={10} w={5} d="M100 650L110 690 180 720 280 740" />
          <St v={110} w={8} d="M410 390L460 375" />
          <St v={14} w={6} d="M540 800L720 800 950 820" />
          <St v={14} w={6} d="M0 825L100 825" />
          <St v={12} w={6} d="M560 560Q570 600 585 635" />
          <St v={12} w={6} d="M640 750L560 760 500 790" />
          <St v={120} w={7} d="M800 455L830 450" />
        </g>
      </g>
    </g>
  </Svg>
);

export default function App() {
  return (
    <Window>
      <GlobalStyle />
      <TitleBar>
        <Icon n="qgis" s={14} />*mesh_datasets - QGIS
        <WindowControls><Icon n="min" s={11} /><Icon n="max" s={11} /><Icon n="x" s={11} /></WindowControls>
      </TitleBar>
      <MenuBar>
        {MENUS.map(([a, u, b, w]) => <MenuItem key={a + u + b} $w={w}>{a}<u>{u}</u>{b}</MenuItem>)}
      </MenuBar>
      <Tools row={ROW1} h={26} />
      <Tools row={ROW2} h={26} />
      <Tools row={ROW3} h={25} />
      <Body>
        <LeftDock>
          <DockTitle>Browser<DockButtons><Icon n="float" s={8} /><Icon n="close" s={8} /></DockButtons></DockTitle>
          <DockTools>
            {['addSel', 'refresh', 'funnel', 'collapse', 'info'].map(n => <Slot key={n} $w={16.7} $h={15}><Icon n={n} s={11} /></Slot>)}
          </DockTools>
          <TreeFrame>
            <Tree>
              {TREE.map(([l, s, ic, t, on, ls], i) => (
                <TreeRow key={i} $level={l} $on={on} $ls={ls}><Twisty $s={s} /><TreeIcon><Icon n={ic} s={13} /></TreeIcon>{t}</TreeRow>
              ))}
            </Tree>
            <VScroll><ScrollBtn $d="up" /><VThumb /><ScrollBtn $d="down" /></VScroll>
            <HScroll><ScrollBtn $d="left" /><HThumb /><ScrollBtn $d="right" /></HScroll>
            <Corner />
          </TreeFrame>
          <Splitter />
          <DockTitle>Layers<DockButtons><Icon n="float" s={8} /><Icon n="close" s={8} /></DockButtons></DockTitle>
          <DockTools>
            <Slot $w={17} $h={16} $on><Icon n="brush" s={12} /></Slot>
            {['group', 'eye', 'funnel'].map(n => <Slot key={n} $w={16.7} $h={15}><Icon n={n} s={12} /></Slot>)}
            <Slot $w={17} $h={15} $off><Icon n="eps" s={12} /></Slot><Caret $off />
            {['expand', 'collapse', 'remSel'].map(n => <Slot key={n} $w={16.7} $h={15}><Icon n={n} s={11} /></Slot>)}
          </DockTools>
          <LayerTree>
            <LayerRow><Twisty $s="closed" /><Check $mr={5}><Icon n="tick" s={9} /></Check><TreeIcon><Icon n="meshB" s={13} /></TreeIcon><b>sample2</b></LayerRow>
          </LayerTree>
        </LeftDock>
        <CanvasFrame><WindMap /></CanvasFrame>
        <RightDock>
          <DockTitle $pl={0}>Layer Styling<DockButtons><Icon n="float" s={8} /><Icon n="close" s={8} /></DockButtons></DockTitle>
          <Combo $h={19}><TreeIcon><Icon n="mesh" s={13} /></TreeIcon>sample2<Caret /></Combo>
          <StyleArea>
            <SideBar>
              <SideCurrent><Icon n="paint" s={15} /></SideCurrent>
              <SideRest><Icon n="tree" s={16} /><Icon n="history" s={14} /></SideRest>
            </SideBar>
            <StylePane>
              <Tabs>
                <Tab $on><Icon n="tools" s={13} /></Tab><Tab><Swatch $s={14} /></Tab><Tab><Icon n="arrow" s={14} /></Tab><Tab><Icon n="grid" s={13} /></Tab>
              </Tabs>
              <GroupBox>
                <GroupHead>Groups</GroupHead>
                <GroupRow $on>10 metre wind<GroupIcons><Swatch /><Icon n="arrowS" s={10} /></GroupIcons></GroupRow>
                <GroupRow $ls={-0.32}>2 metre temperature<GroupIcons><Swatch $grey /></GroupIcons></GroupRow>
                <GroupRow $ls={-0.18}>Total precipitation<GroupIcons><Swatch $grey /></GroupIcons></GroupRow>
              </GroupBox>
              <Label $m="5px 0 0 24px">Dataset in Selected Group(s)</Label>
              <Slider>
                <Track><Knob /><Groove /></Track>
                <Ticks>{Array.from({ length: 12 }, (_, i) => <i key={i} />)}</Ticks>
              </Slider>
              <TimeRow>
                <Combo $h={16} $w={199} $edit>20:45:52<Caret /></Combo>
                <Step $w={30}>|&lt;</Step><Step $w={18}>&lt;</Step><Step $w={24}>&gt;</Step><Step $w={22}>&gt;|</Step>
              </TimeRow>
              <Section $m="6px 0 0 25px">Metadata</Section>
              <Panel $m="1px 22px 0 24px" $h={79}>
                <Meta>
                  <dt>Is valid</dt><dd>Yes</dd><dt>Time</dt><dd>1.03438e+06</dd><dt>Data Type</dt><dd>Defined on vertices</dd>
                  <dt>Is vector</dt><dd>Yes</dd><dt>name</dt><dd>10 metre wind</dd>
                </Meta>
              </Panel>
              <Section $m="13px 0 0 18px">Layer Rendering</Section>
              <Panel $m="1px 15px 0 17px" $h={34}>
                <Blend>Blending mode<Combo $h={16} $w={141}>Normal<Caret /></Combo></Blend>
              </Panel>
              <Footer>
                <Push $h={18} $w={18} $mr={5}><Icon n="undoC" s={11} /></Push><Push $h={18} $w={18} $mr={175}><Icon n="redoC" s={11} /></Push>
                <Check $mr={4}><Icon n="tick" s={9} /></Check>Live update
                <Push $h={17} $w={53} $ml={7}>Apply</Push>
              </Footer>
            </StylePane>
          </StyleArea>
        </RightDock>
      </Body>
    </Window>
  );
}
